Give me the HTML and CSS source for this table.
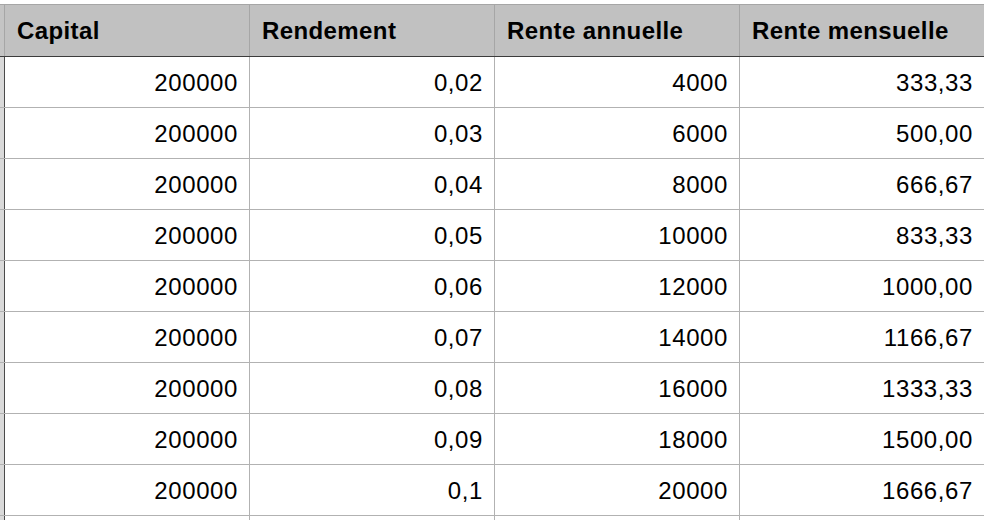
FILE: index.html
```html
<!DOCTYPE html>
<html>
<head>
<meta charset="utf-8">
<link rel="stylesheet" href="styles.css">
</head>
<body>
<div class="sheet">
  <div class="row head">
    <div class="gutter"></div>
    <div class="cell">Capital</div>
    <div class="cell">Rendement</div>
    <div class="cell">Rente annuelle</div>
    <div class="cell last">Rente mensuelle</div>
  </div>
  <div class="row"><div class="gutter"></div><div class="cell num">200000</div><div class="cell num">0,02</div><div class="cell num">4000</div><div class="cell num last">333,33</div></div>
  <div class="row"><div class="gutter"></div><div class="cell num">200000</div><div class="cell num">0,03</div><div class="cell num">6000</div><div class="cell num last">500,00</div></div>
  <div class="row"><div class="gutter"></div><div class="cell num">200000</div><div class="cell num">0,04</div><div class="cell num">8000</div><div class="cell num last">666,67</div></div>
  <div class="row"><div class="gutter"></div><div class="cell num">200000</div><div class="cell num">0,05</div><div class="cell num">10000</div><div class="cell num last">833,33</div></div>
  <div class="row"><div class="gutter"></div><div class="cell num">200000</div><div class="cell num">0,06</div><div class="cell num">12000</div><div class="cell num last">1000,00</div></div>
  <div class="row"><div class="gutter"></div><div class="cell num">200000</div><div class="cell num">0,07</div><div class="cell num">14000</div><div class="cell num last">1166,67</div></div>
  <div class="row"><div class="gutter"></div><div class="cell num">200000</div><div class="cell num">0,08</div><div class="cell num">16000</div><div class="cell num last">1333,33</div></div>
  <div class="row"><div class="gutter"></div><div class="cell num">200000</div><div class="cell num">0,09</div><div class="cell num">18000</div><div class="cell num last">1500,00</div></div>
  <div class="row"><div class="gutter"></div><div class="cell num">200000</div><div class="cell num">0,1</div><div class="cell num">20000</div><div class="cell num last">1666,67</div></div>
  <div class="row tail"><div class="gutter"></div><div class="cell num"></div><div class="cell num"></div><div class="cell num"></div><div class="cell num last"></div></div>
</div>
</body>
</html>
```

FILE: styles.css
```css
html, body {
  margin: 0;
  padding: 0;
  background: #ffffff;
  overflow: hidden;
}
body {
  width: 984px;
  height: 520px;
  font-family: "Liberation Sans", Arial, sans-serif;
  color: #000;
}
.sheet {
  padding-top: 4px;
  width: 984px;
  height: 520px;
  box-sizing: border-box;
  overflow: hidden;
}
.row {
  display: flex;
  height: 51px;
  box-sizing: border-box;
  border-bottom: 1px solid #b2b2b2;
}
.tail {
  height: 5px;
  border-bottom: none;
}
.gutter {
  width: 5px;
  flex: none;
  box-sizing: border-box;
  background: #d9d9d9;
  border-right: 1px solid #4a4a4a;
}
.cell {
  width: 245px;
  flex: none;
  box-sizing: border-box;
  border-right: 1px solid #b2b2b2;
  display: flex;
  align-items: center;
  white-space: nowrap;
}
.cell.last {
  width: 244px;
  border-right: none;
}
.head {
  height: 53px;
  background: #c1c1c1;
  border-top: 1px solid #a6a6a6;
  border-bottom: 1px solid #3c3c3c;
}
.head .gutter {
  background: #c4c4c4;
  border-right-color: #a6a6a6;
}
.head .cell {
  border-right-color: #a6a6a6;
  font-weight: bold;
  font-size: 24px;
  letter-spacing: 0.4px;
  padding-left: 12px;
  padding-top: 1px;
}
.num {
  justify-content: flex-end;
  padding-right: 11px;
  font-size: 24px;
  letter-spacing: 0.6px;
  padding-top: 2px;
}
```
